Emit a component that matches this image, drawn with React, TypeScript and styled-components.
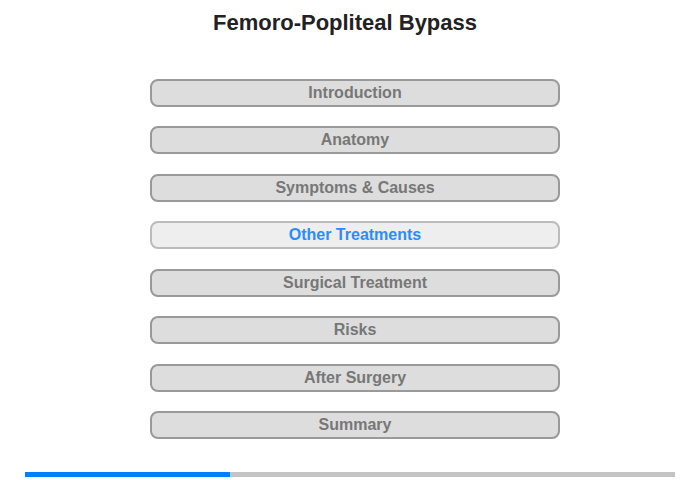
import React from "react";
import styled, { createGlobalStyle } from "styled-components";

const Global = createGlobalStyle`
  html, body { margin: 0; padding: 0; background: #ffffff; }
  body { font-family: "Liberation Sans", Arial, sans-serif; }
`;

const Page = styled.div`
  width: 700px;
  height: 480px;
  display: flex;
  flex-direction: column;
  box-sizing: border-box;
`;

const Title = styled.h1`
  margin: 0;
  padding: 11px 10px 0 0;
  height: 24px;
  line-height: 24px;
  text-align: center;
  font-size: 22px;
  font-weight: bold;
  color: #222222;
`;

const Menu = styled.nav`
  display: flex;
  flex-direction: column;
  gap: 19.43px;
  margin: 44px 0 0 150px;
  width: 410px;
`;

const Item = styled.div<{ $active?: boolean }>`
  box-sizing: border-box;
  height: 28px;
  border: 2px solid ${(p) => (p.$active ? "#bbbbbb" : "#999999")};
  border-radius: 8px;
  background: ${(p) => (p.$active ? "#eeeeee" : "#dddddd")};
  color: ${(p) => (p.$active ? "#2b8cff" : "#777777")};
  font-size: 16px;
  font-weight: bold;
  display: flex;
  align-items: center;
  justify-content: center;
  line-height: 1;
`;

const Progress = styled.div`
  margin: 33px 0 0 25px;
  width: 650px;
  height: 5px;
  background: #c4c4c4;
  display: flex;
`;

const Fill = styled.div`
  height: 100%;
  background: #0080ff;
`;

const items = [
  "Introduction",
  "Anatomy",
  "Symptoms & Causes",
  "Other Treatments",
  "Surgical Treatment",
  "Risks",
  "After Surgery",
  "Summary",
];

export default function App() {
  const active = 3;
  return (
    <Page>
      <Global />
      <Title>Femoro-Popliteal Bypass</Title>
      <Menu>
        {items.map((t, i) => (
          <Item key={t} $active={i === active}>
            {t}
          </Item>
        ))}
      </Menu>
      <Progress>
        <Fill style={{ width: `${(205 / 650) * 100}%` }} />
      </Progress>
    </Page>
  );
}
